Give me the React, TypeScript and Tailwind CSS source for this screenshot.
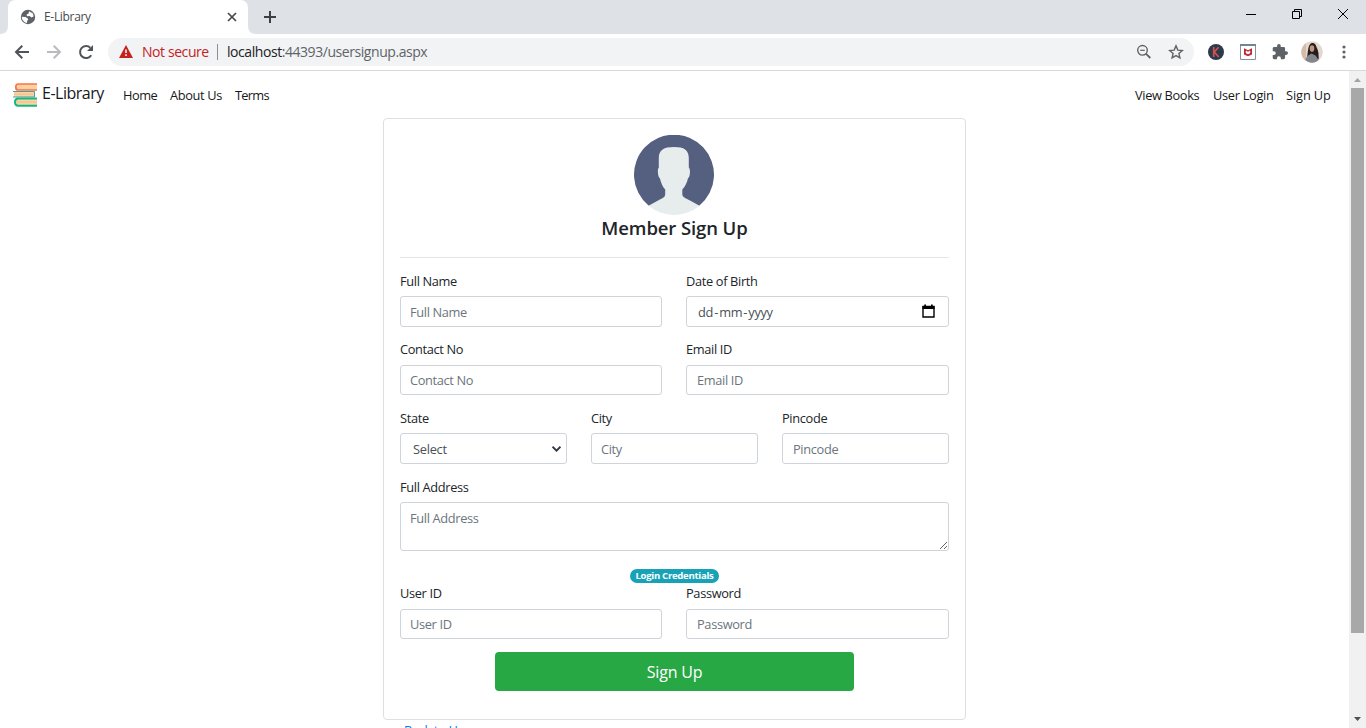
import type { ReactNode } from "react";

function Globe() {
  return (
    <svg width="16" height="16" viewBox="0 0 16 16" className="shrink-0">
      <circle cx="8" cy="8" r="7.2" fill="#5f6368" />
      <path d="M9 2.2 L13 4.6 L13.6 7.6 L11.4 8.6 L9.6 7 L7 7.3 L6.6 5.6 L8.6 4.6 Z" fill="#fff" />
      <path d="M1.8 7.8 L5.6 8 L8.4 10 L7.4 11.6 L6.8 14 C4 13.4 1.8 11 1.8 7.8 Z" fill="#fff" />
    </svg>
  );
}

function Books() {
  return (
    <svg width="24" height="24" viewBox="0 0 24 24" className="mt-3 shrink-0">
      <rect x="3" y="1" width="21" height="6" fill="#f9d3a4" />
      <path d="M24 1H5.2C3 1 2.8 2.2 2.8 4s.3 3 2.4 3H24" fill="none" stroke="#ff7048" strokeWidth="1.7" />
      <rect x="1" y="8.5" width="20.5" height="5.5" fill="#f9d3a4" />
      <path d="M0 8.5h21.5v5.5H0" fill="none" stroke="#4b9d9f" strokeWidth="1" />
      <path d="M1 11.2h19" stroke="#e6bd85" strokeWidth=".8" />
      <rect x="3" y="16" width="21" height="6" fill="#f9d3a4" />
      <path d="M24 15.4H5.2C2.6 15.4 2 16.6 2 19s.6 3.8 3.2 3.8H24" fill="none" stroke="#10b981" strokeWidth="2" />
      <path d="M4 19h20" stroke="#e6bd85" strokeWidth=".8" />
    </svg>
  );
}

function Avatar() {
  return (
    <svg width="80" height="80" viewBox="0 0 80 80" className="mr-px shrink-0">
      <path d="M14.5 70.5A40 40 0 1 1 65.5 70.5L40 76Z" fill="#556080" />
      <path d="M31.2 54.5C28.5 52 27 47.5 25.9 43.2C24 42.3 23 34.5 24.8 32.5V23C24.8 15 30 12 40 12S54.8 15 54.8 23V32.5C56.8 34.5 56 42.3 54 43.2C53 47.5 51 52 48.3 54.5V59.5C48.6 62.5 52 63.2 56 65.5L65.5 70.8A40 40 0 0 1 14.5 70.8L25 65C29 63 30.8 62.3 31.2 59.5Z" fill="#e7eced" />
    </svg>
  );
}

function TabStrip() {
  return (
    <div className="flex h-[34px] shrink-0 bg-[#dee1e6]">
      <svg width="256" height="34" className="absolute left-0 top-0">
        <path d="M0 34C5 34 8 31 8 26V8C8 3 11 0 16 0H240C245 0 248 3 248 8V26C248 31 251 34 256 34Z" fill="#fff" />
      </svg>
      <div className="relative flex h-[34px] w-[248px] shrink-0 items-center pl-5 pr-[11px]">
        <Globe />
        <span className="ml-2 flex-1 text-[12px] tracking-[-0.32px] text-[#45494d]">E-Library</span>
        <svg width="10" height="10" viewBox="0 0 10 10"><path d="M1 1L9 9M9 1L1 9" stroke="#45494d" strokeWidth="1.7" /></svg>
      </div>
      <div className="flex w-11 items-center justify-center">
        <svg width="12" height="12" viewBox="0 0 12 12"><path d="M6 0V12M0 6H12" stroke="#3c4043" strokeWidth="2" /></svg>
      </div>
      <div className="ml-auto flex h-[27px] items-center text-black">
        <svg width="46" height="12" viewBox="0 0 46 12"><path d="M18 6.5H28" stroke="currentColor" /></svg>
        <svg width="46" height="12" viewBox="0 0 46 12"><path d="M18.5 3.5H25.5V10.5H18.5ZM20.5 3.5V1.5H27.5V8.5H25.5" fill="none" stroke="currentColor" /></svg>
        <svg width="46" height="12" viewBox="0 0 46 12"><path d="M18 1L28 11M28 1L18 11" fill="none" stroke="currentColor" /></svg>
      </div>
    </div>
  );
}

function Toolbar() {
  return (
    <div className="flex h-[37px] shrink-0 items-center border-b border-[#d6d8db] bg-white pl-[14px]">
      <svg width="16" height="16" viewBox="0 0 16 16" fill="none" stroke="#505459" strokeWidth="2"><path d="M15 8H2.5M8.3 1.7L2 8L8.3 14.3" /></svg>
      <svg width="16" height="16" viewBox="0 0 16 16" fill="none" stroke="#b9bbbe" strokeWidth="2" className="ml-4"><path d="M1 8H13.5M7.7 1.7L14 8L7.7 14.3" /></svg>
      <svg width="16" height="16" viewBox="0 0 16 16" className="ml-4">
        <path d="M13.2 11.2A6 6 0 1 1 12.3 3.8" fill="none" stroke="#505459" strokeWidth="2" />
        <path d="M15 1V7H9Z" fill="#505459" />
      </svg>
      <div className="ml-[14px] flex h-7 w-[1086px] items-center rounded-full bg-[#f1f3f4] pl-[11px] pr-[10px]">
        <svg width="14" height="13" viewBox="0 0 14 13" className="mb-px"><path d="M7 0L14 13H0Z" fill="#c5221f" /><path d="M7 4.5V8M7 9.3V11" stroke="#fff" strokeWidth="1.5" /></svg>
        <span className="mb-px ml-[9px] w-[67px] whitespace-nowrap text-[14px] tracking-[-0.42px] text-[#c5221f]">Not secure</span>
        <span className="ml-2 h-4 w-px bg-[#8b8e92]" />
        <span className="mb-px ml-[9px] flex-1 whitespace-nowrap text-[14px] tracking-[-0.44px] text-[#5f6368]"><span className="text-[#202124]">localhost</span>:44393/usersignup.aspx</span>
        <svg width="16" height="16" viewBox="0 0 16 16" fill="none" stroke="#5f6368" className="mr-4"><circle cx="6.5" cy="6.3" r="4.8" strokeWidth="1.4" /><path d="M9.8 9.6L14.3 14" strokeWidth="1.8" /><path d="M4.2 6.3H8.8" strokeWidth="1.2" /></svg>
        <svg width="16" height="16" viewBox="0 0 16 16" fill="none" stroke="#5f6368" strokeWidth="1.4"><path d="M8 1.9L9.8 6.1L14.3 6.5L10.9 9.5L11.9 13.9L8 11.6L4.1 13.9L5.1 9.5L1.7 6.5L6.2 6.1Z" /></svg>
      </div>
      <svg width="16" height="16" viewBox="0 0 16 16" className="ml-[14px]"><circle cx="8" cy="8" r="8" fill="#2b3b4c" /><path d="M5.7 3V13M10.5 3.2L6.3 8L10.7 13" fill="none" stroke="#d4504c" strokeWidth="1.7" /></svg>
      <svg width="16" height="16" viewBox="0 0 16 16" className="ml-4"><path d="M.5 .5H15.5V15.5H.5Z" fill="#fff" stroke="#8b9296" /><path d="M0 1H16" stroke="#6d8795" strokeWidth="2" /><path d="M4 4.2L8 6.2L12 4.2V10.4L8 12.3L4 10.4Z" fill="#c1272d" /><path d="M5.8 6.6L8 7.7L10.2 6.6V9.2L8 10.2L5.8 9.2Z" fill="#fff" /></svg>
      <svg width="16" height="16" viewBox="1 1 22 22" className="ml-4"><path d="M20.5 11H19V7a2 2 0 0 0-2-2h-4V3.5a2.5 2.5 0 0 0-5 0V5H4a2 2 0 0 0-2 2v3.8h1.5a2.7 2.7 0 0 1 0 5.4H2V20a2 2 0 0 0 2 2h3.8v-1.5a2.7 2.7 0 0 1 5.4 0V22H17a2 2 0 0 0 2-2v-4h1.5a2.5 2.5 0 0 0 0-5z" fill="#5f6368" /></svg>
      <svg width="22" height="22" viewBox="0 0 22 22" className="ml-[13px]">
        <defs><clipPath id="face"><circle cx="11" cy="11" r="10.7" /></clipPath></defs>
        <g clipPath="url(#face)">
          <rect width="22" height="22" fill="#e3d8ce" />
          <rect width="5" height="22" fill="#d3bca8" />
          <path d="M6 18C7 10 7 2 11.5 2S16.5 9 17.5 18Z" fill="#251d20" />
          <ellipse cx="11" cy="7.6" rx="2.3" ry="3.3" fill="#c39580" />
          <path d="M4 22C4 16 7 14.5 10.5 12.5C15 14.5 18 16 18 22Z" fill="#85868b" />
          <path d="M14 9C15 13 15 17 17.5 18V12L16 7Z" fill="#251d20" />
        </g>
      </svg>
      <svg width="4" height="14" viewBox="0 0 4 14" className="ml-[19px]" fill="#5f6368"><circle cx="2" cy="2" r="1.6" /><circle cx="2" cy="7" r="1.6" /><circle cx="2" cy="12" r="1.6" /></svg>
    </div>
  );
}

function NavBar() {
  return (
    <nav className="flex h-[47px] shrink-0 items-start pl-[13px] pr-[18px] text-[12.8px] leading-[19px] text-[#16181b]">
      <Books />
      <span className="ml-[5px] mt-[10px] w-[62px] whitespace-nowrap text-[16px] leading-6 tracking-[-0.5px]">E-Library</span>
      <span className="ml-[19px] mt-[15px] w-[34px] whitespace-nowrap tracking-[-0.5px]">Home</span>
      <span className="ml-[13px] mt-[15px] w-[53px] whitespace-nowrap tracking-[-0.35px]">About Us</span>
      <span className="ml-3 mt-[15px] whitespace-nowrap tracking-[-0.7px]">Terms</span>
      <span className="ml-auto mt-[15px] w-[65px] whitespace-nowrap tracking-[-0.35px]">View Books</span>
      <span className="ml-[13px] mt-[15px] w-[60px] whitespace-nowrap tracking-[-0.3px]">User Login</span>
      <span className="ml-[13px] mt-[15px] w-[45px] whitespace-nowrap tracking-[-0.1px]">Sign Up</span>
    </nav>
  );
}

function Field({ label, children, width = "flex-1" }: { label: string; children: ReactNode; width?: string }) {
  return (
    <div className={`flex min-w-0 flex-col ${width}`}>
      <label className="mb-[5px] whitespace-nowrap leading-[19px] text-[#212529]">{label}</label>
      {children}
    </div>
  );
}

const box = "w-full rounded-[3px] border border-[#ced4da] bg-white px-[9px] text-[#495057] placeholder:text-[#6c757d] outline-none";
const half = "w-[262px] shrink-0";

function SignUpCard() {
  return (
    <section className="ml-[383px] flex h-[602px] w-[583px] shrink-0 flex-col rounded-[4px] border border-[#dfdfdf] px-4 pt-4 text-[12.8px] tracking-[-0.34px]">
      <div className="flex h-[123px] flex-col items-center border-b border-[#e5e5e5]">
        <Avatar />
        <h1 className="text-[18.5px] font-semibold leading-[25px] tracking-[-0.1px] text-[#212529]">Member Sign Up</h1>
      </div>
      <div className="mt-[14px] flex gap-6">
        <Field label="Full Name" width={half}><input className={`${box} h-[31px]`} placeholder="Full Name" /></Field>
        <Field label="Date of Birth">
          <div className={`${box} flex h-[31px] items-center justify-between pl-[11px] pr-[13px]`}>
            <span className="pt-0.5">dd<span className="px-[1.2px]">-</span>mm<span className="px-[1.2px]">-</span>yyyy</span>
            <svg width="13" height="14" viewBox="0 0 13 14" className="mb-0.5"><path d="M1 2.5H12V13H1Z" fill="none" stroke="#000" strokeWidth="1.4" /><path d="M.5 2H12.5V5H.5ZM2.3 .5H4V2.5H2.3ZM9 .5H10.7V2.5H9Z" /></svg>
          </div>
        </Field>
      </div>
      <div className="mt-[13px] flex gap-6">
        <Field label="Contact No" width={half}><input className={`${box} mt-px h-[30px]`} placeholder="Contact No" /></Field>
        <Field label="Email ID"><input className={`${box} mt-px h-[30px] pl-[10px]`} placeholder="Email ID" /></Field>
      </div>
      <div className="mt-[14px] flex gap-6">
        <Field label="State">
          <div className={`${box} flex h-[31px] items-center justify-between pr-[5px]`}>
            <span className="pl-[3px] pt-0.5 tracking-[-0.25px]">Select</span>
            <svg width="9" height="6" viewBox="0 0 9 6"><path d="M.5 .7L4.5 4.6L8.5 .7" fill="none" stroke="#343a40" strokeWidth="2" /></svg>
          </div>
        </Field>
        <Field label="City"><input className={`${box} h-[31px]`} placeholder="City" /></Field>
        <Field label="Pincode"><input className={`${box} h-[31px] pl-[10px]`} placeholder="Pincode" /></Field>
      </div>
      <div className="mt-[14px] flex">
        <Field label="Full Address"><textarea className={`${box} h-[49px] resize py-[6px] leading-[19px]`} placeholder="Full Address" /></Field>
      </div>
      <div className="mt-[18px] flex h-[14px] justify-center">
        <span className="flex h-[14px] w-[89px] items-center justify-center whitespace-nowrap rounded-full bg-[#17a2b8] text-[9.6px] font-bold leading-none tracking-[-0.3px] text-white">Login Credentials</span>
      </div>
      <div className="mt-px flex gap-6">
        <Field label="User ID" width={half}><input className={`${box} mt-px h-[30px]`} placeholder="User ID" /></Field>
        <Field label="Password"><input className={`${box} mt-px h-[30px] pl-[10px]`} placeholder="Password" /></Field>
      </div>
      <button className="ml-[95px] mt-[13px] h-[39px] w-[359px] shrink-0 rounded-[4px] bg-[#28a745] text-[16px] tracking-[-0.2px] text-white">Sign Up</button>
    </section>
  );
}

function ScrollBar() {
  return (
    <div className="flex w-[17px] shrink-0 flex-col items-center justify-between bg-[#f1f1f1]">
      <div className="flex flex-col items-center">
        <svg width="17" height="17"><path d="M5 11H12L8.5 7Z" fill="#a3a3a3" /></svg>
        <div className="h-[545px] w-[13px] bg-[#a8a8a8]" />
      </div>
      <svg width="17" height="17"><path d="M5 6H12L8.5 10Z" fill="#505050" /></svg>
    </div>
  );
}

export default function App() {
  return (
    <div className="relative flex h-[728px] w-[1366px] flex-col overflow-hidden bg-white font-['Open_Sans',sans-serif]">
      <TabStrip />
      <Toolbar />
      <div className="flex h-[657px] shrink-0">
        <main className="flex h-[657px] flex-1 flex-col overflow-hidden">
          <NavBar />
          <SignUpCard />
          <a className="ml-[404px] mt-px shrink-0 whitespace-nowrap text-[12.8px] leading-[19px] tracking-[-0.34px] text-[#007bff]">Back to Home</a>
        </main>
        <ScrollBar />
      </div>
    </div>
  );
}
